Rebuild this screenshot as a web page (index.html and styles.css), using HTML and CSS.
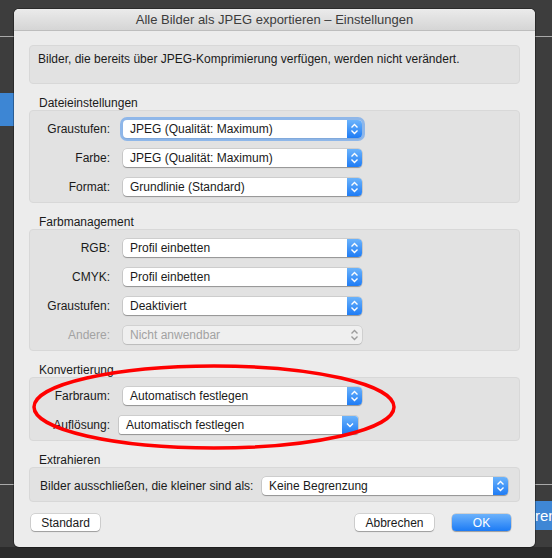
FILE: index.html
```html
<!DOCTYPE html>
<html lang="de">
<head>
  <meta charset="UTF-8">
  <title>Alle Bilder als JPEG exportieren – Einstellungen</title>
  <link rel="stylesheet" href="styles.css">
</head>
<body>
  <!-- the app window behind the sheet -->
  <div class="desk">
    <div class="desk-line top"></div>
    <div class="desk-line bottom"></div>
    <div class="desk-tab"></div>
    <div class="desk-button">ren</div>
    <div class="desk-floor"></div>
  </div>

  <div class="dialog">
    <div class="titlebar">Alle Bilder als JPEG exportieren – Einstellungen</div>

    <div class="content">
      <div class="note">Bilder, die bereits über JPEG-Komprimierung verfügen, werden nicht verändert.</div>

      <div class="group-title">Dateieinstellungen</div>
      <div class="group">
        <div class="row">
          <label>Graustufen:</label>
          <div class="popup focus">
            <span>JPEG (Qualität: Maximum)</span>
            <svg class="arrows" viewBox="0 0 15 18"><path d="M4.5 7.5 7.5 4.5 10.5 7.5M4.5 10.5 7.5 13.5 10.5 10.5"/></svg>
          </div>
        </div>
        <div class="row">
          <label>Farbe:</label>
          <div class="popup">
            <span>JPEG (Qualität: Maximum)</span>
            <svg class="arrows" viewBox="0 0 15 18"><path d="M4.5 7.5 7.5 4.5 10.5 7.5M4.5 10.5 7.5 13.5 10.5 10.5"/></svg>
          </div>
        </div>
        <div class="row">
          <label>Format:</label>
          <div class="popup">
            <span>Grundlinie (Standard)</span>
            <svg class="arrows" viewBox="0 0 15 18"><path d="M4.5 7.5 7.5 4.5 10.5 7.5M4.5 10.5 7.5 13.5 10.5 10.5"/></svg>
          </div>
        </div>
      </div>

      <div class="group-title">Farbmanagement</div>
      <div class="group">
        <div class="row">
          <label>RGB:</label>
          <div class="popup">
            <span>Profil einbetten</span>
            <svg class="arrows" viewBox="0 0 15 18"><path d="M4.5 7.5 7.5 4.5 10.5 7.5M4.5 10.5 7.5 13.5 10.5 10.5"/></svg>
          </div>
        </div>
        <div class="row">
          <label>CMYK:</label>
          <div class="popup">
            <span>Profil einbetten</span>
            <svg class="arrows" viewBox="0 0 15 18"><path d="M4.5 7.5 7.5 4.5 10.5 7.5M4.5 10.5 7.5 13.5 10.5 10.5"/></svg>
          </div>
        </div>
        <div class="row">
          <label>Graustufen:</label>
          <div class="popup">
            <span>Deaktiviert</span>
            <svg class="arrows" viewBox="0 0 15 18"><path d="M4.5 7.5 7.5 4.5 10.5 7.5M4.5 10.5 7.5 13.5 10.5 10.5"/></svg>
          </div>
        </div>
        <div class="row disabled">
          <label>Andere:</label>
          <div class="popup">
            <span>Nicht anwendbar</span>
            <svg class="arrows" viewBox="0 0 15 18"><path d="M4.5 7.5 7.5 4.5 10.5 7.5M4.5 10.5 7.5 13.5 10.5 10.5"/></svg>
          </div>
        </div>
      </div>

      <div class="group-title">Konvertierung</div>
      <div class="group">
        <div class="row">
          <label>Farbraum:</label>
          <div class="popup">
            <span>Automatisch festlegen</span>
            <svg class="arrows" viewBox="0 0 15 18"><path d="M4.5 7.5 7.5 4.5 10.5 7.5M4.5 10.5 7.5 13.5 10.5 10.5"/></svg>
          </div>
        </div>
        <div class="row">
          <label>Auflösung:</label>
          <div class="popup pulldown">
            <span>Automatisch festlegen</span>
            <svg class="arrows" viewBox="0 0 16 18"><path d="M5 7.5 8 10.5 11 7.5"/></svg>
          </div>
        </div>
      </div>

      <div class="group-title">Extrahieren</div>
      <div class="group">
        <div class="row wide">
          <label>Bilder ausschließen, die kleiner sind als:</label>
          <div class="popup">
            <span>Keine Begrenzung</span>
            <svg class="arrows" viewBox="0 0 15 18"><path d="M4.5 7.5 7.5 4.5 10.5 7.5M4.5 10.5 7.5 13.5 10.5 10.5"/></svg>
          </div>
        </div>
      </div>

      <div class="buttons">
        <button class="btn standard">Standard</button>
        <button class="btn cancel">Abbrechen</button>
        <button class="btn ok">OK</button>
      </div>
    </div>
  </div>

  <!-- hand drawn marker on top of the screenshot -->
  <svg class="marker" viewBox="0 0 552 558">
    <ellipse cx="214" cy="407" rx="180" ry="41"/>
  </svg>
</body>
</html>
```

FILE: styles.css
```css
* {
  box-sizing: border-box;
}

body {
  margin: 0;
  width: 552px;
  height: 558px;
  overflow: hidden;
  position: relative;
  background: #3d3d3d;
  font-family: 'Liberation Sans', Arial, sans-serif;
  font-size: 12px;
  color: #1a1a1a;
}

/* background window */
.desk-line {
  position: absolute;
  left: 0;
  right: 0;
  height: 1px;
  background: #a9a9a9;
}

.desk-line.top { top: 36px; }
.desk-line.bottom { top: 484px; }

.desk-tab {
  position: absolute;
  left: 0;
  top: 93px;
  width: 16px;
  height: 33px;
  background: #3d86d4;
}

.desk-button {
  position: absolute;
  left: 530px;
  top: 501px;
  width: 26px;
  height: 29px;
  padding-left: 5px;
  background: #3f87d5;
  color: #fff;
  font-size: 15px;
  line-height: 29px;
  white-space: nowrap;
}

.desk-floor {
  position: absolute;
  left: 0;
  right: 0;
  top: 547px;
  bottom: 0;
  background: #2b2b2b;
}

/* sheet */
.dialog {
  position: relative;
  margin: 9px 0 0 14px;
  width: 521px;
  height: 538px;
  background: #ececec;
  border-radius: 5px;
  overflow: hidden;
  box-shadow: 0 0 0 1px rgba(0, 0, 0, 0.3);
}

.titlebar {
  height: 22px;
  line-height: 21px;
  text-align: center;
  font-size: 13px;
  color: #3c3c3c;
  background: linear-gradient(#ebebeb, #d5d5d5);
  border-bottom: 1px solid #bdbdbd;
}

.content {
  padding: 14px 15px 0;
}

.note {
  height: 39px;
  padding: 6px 8px;
  line-height: 14px;
  background: #e2e2e2;
  border: 1px solid #d8d8d8;
  border-radius: 4px;
}

.group-title {
  margin: 12px 0 0 10px;
  line-height: 14px;
}

.group {
  display: flex;
  flex-direction: column;
  gap: 11px;
  padding: 9px 0 6px;
  background: #e2e2e2;
  border: 1px solid #d8d8d8;
  border-radius: 4px;
}

.row {
  display: flex;
  align-items: center;
  height: 18px;
}

.row label {
  width: 80px;
  margin-right: 13px;
  text-align: right;
}

.popup {
  display: flex;
  width: 239px;
  height: 18px;
  background: #fff;
  border-radius: 4px;
  box-shadow: 0 0 0 0.5px rgba(0, 0, 0, 0.18), 0 1px 1px rgba(0, 0, 0, 0.28);
}

.popup span {
  flex: 1;
  padding-left: 7px;
  line-height: 18px;
  white-space: nowrap;
}

.popup .arrows {
  width: 15px;
  height: 18px;
  background: linear-gradient(#6bb3fb, #1f7cf5);
  border-radius: 0 4px 4px 0;
  fill: none;
  stroke: #fff;
  stroke-width: 1.4;
}

.popup.focus {
  box-shadow: 0 0 0 3px rgba(98, 159, 236, 0.65), 0 1px 1px rgba(0, 0, 0, 0.2);
}

.popup.pulldown {
  margin-left: -4px;
  border-radius: 2px;
}

.popup.pulldown .arrows {
  width: 16px;
  border-radius: 0 3px 3px 0;
}

.disabled label {
  color: #a2a2a2;
}

.disabled .popup {
  background: #efefef;
  color: #a2a2a2;
  box-shadow: 0 0 0 0.5px rgba(0, 0, 0, 0.15), 0 1px 1px rgba(0, 0, 0, 0.1);
}

.disabled .popup .arrows {
  background: none;
  stroke: #9c9c9c;
}

.row.wide label {
  width: auto;
  margin: 0 0 0 10px;
  text-align: left;
}

.row.wide .popup {
  width: 246px;
  margin: 0 11px 0 auto;
}

.buttons {
  display: flex;
  margin-top: 12px;
  padding: 0 9px 0 2px;
}

.btn {
  height: 17px;
  padding: 0;
  border: none;
  border-radius: 4px;
  background: #fff;
  font-family: inherit;
  font-size: 12px;
  color: #1a1a1a;
  box-shadow: 0 0 0 0.5px rgba(0, 0, 0, 0.22), 0 1px 1px rgba(0, 0, 0, 0.25);
}

.btn.standard { width: 69px; }
.btn.cancel { width: 79px; margin-left: auto; }

.btn.ok {
  width: 59px;
  margin-left: 18px;
  color: #fff;
  background: linear-gradient(#6cb2fb, #1c7bf5);
}

.marker {
  position: absolute;
  left: 0;
  top: 0;
  width: 552px;
  height: 558px;
  pointer-events: none;
  fill: none;
  stroke: #f00;
  stroke-width: 3.5;
}
```
